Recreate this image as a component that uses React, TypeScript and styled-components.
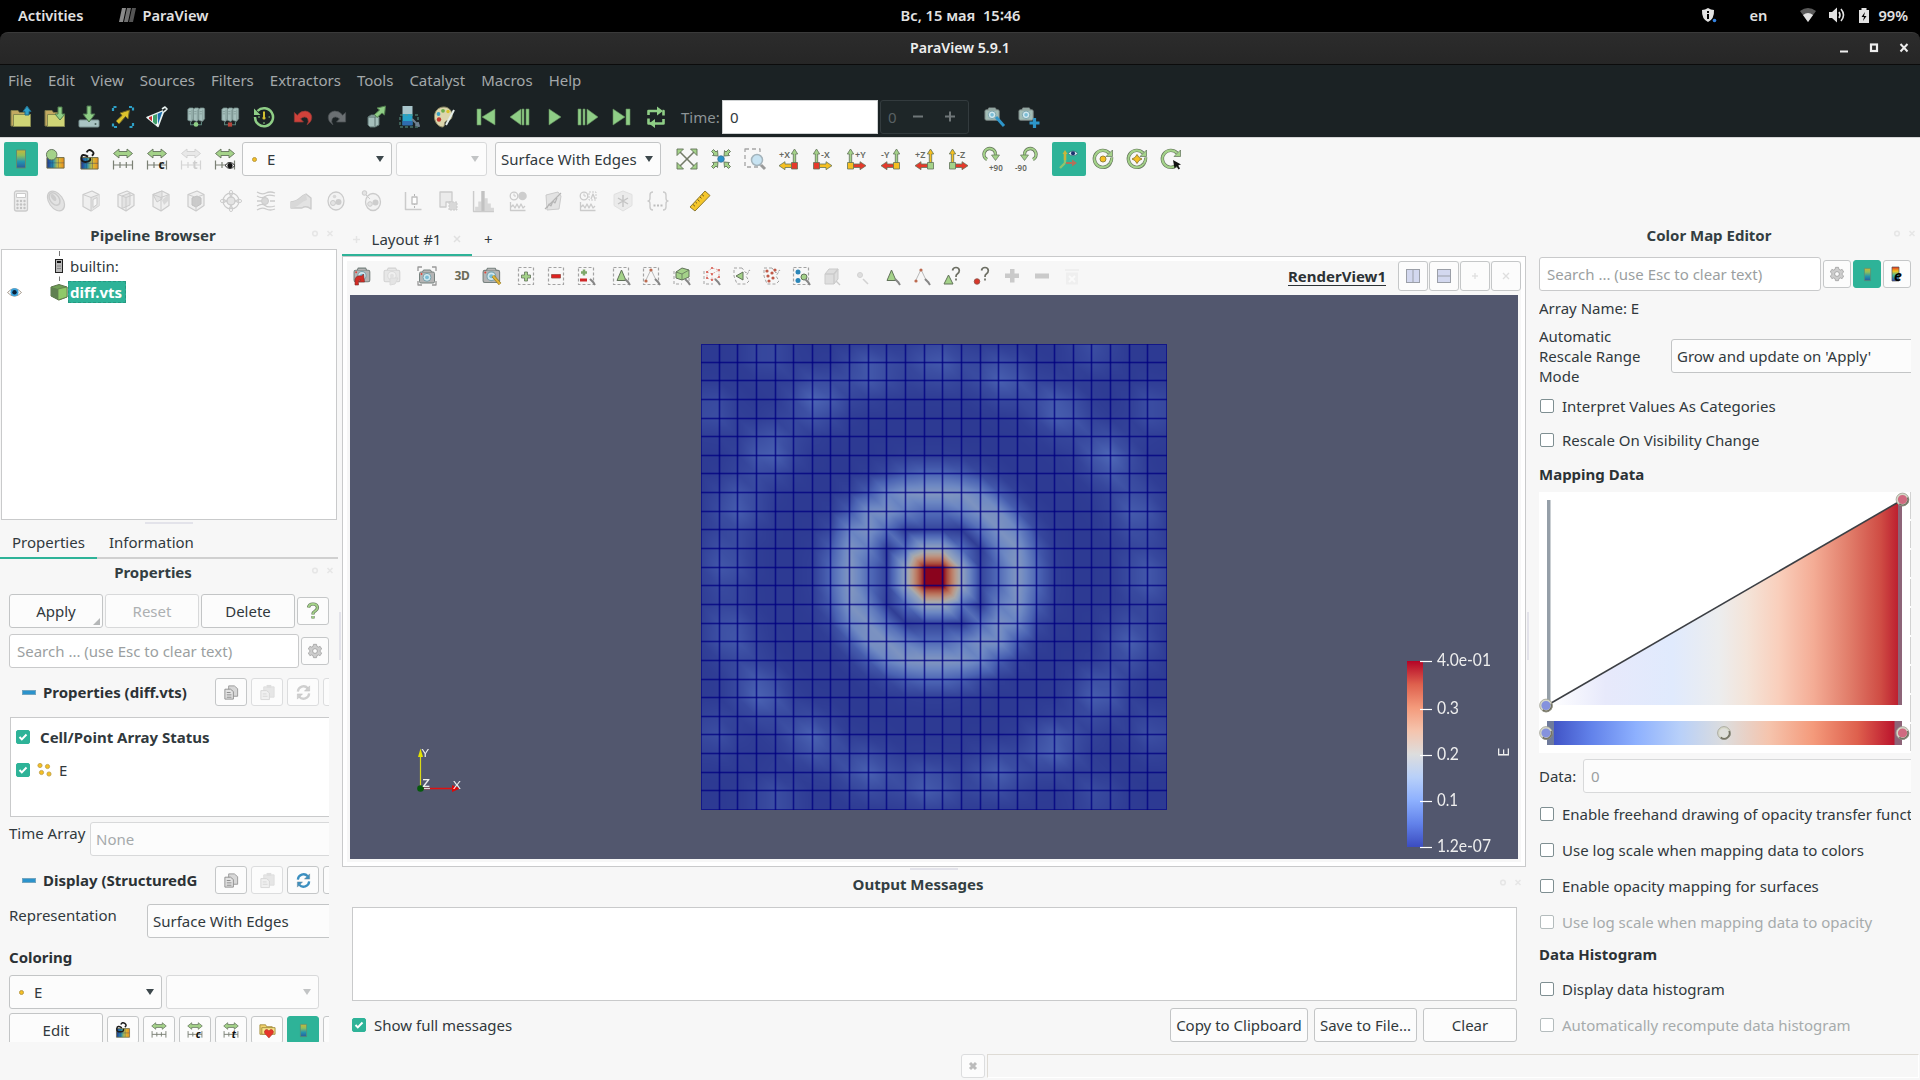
import React, { useLayoutEffect, useRef } from "react";
import styled, { createGlobalStyle, css } from "styled-components";

const GlobalStyle = createGlobalStyle`
  * { box-sizing: border-box; }
  html, body { margin: 0; padding: 0; width: 1920px; height: 1080px; overflow: hidden; background: #000; }
  body { font-family: "Noto Sans", "Open Sans", sans-serif; font-size: 15px; line-height: 20px; color: #31393d; }
  svg { display: block; flex: none; overflow: visible; }
`;

const ACCENT = "#2eb398";
const LINE = "#c9cacb";

/* ---------- window chrome ---------- */
const Desktop = styled.div`
  width: 1920px; height: 1080px; display: flex; flex-direction: column; background: #000; overflow: hidden; white-space: nowrap;
`;
const TopBar = styled.div`
  height: 32px; display: grid; grid-template-columns: 1fr auto 1fr; align-items: center; padding-bottom: 2px;
  color: #e2e2e2; font-weight: 600; background: #000; font-size: 14.67px;
`;
const TopLeft = styled.div`display: flex; align-items: center; padding-left: 18px;`;
const AppName = styled.div`display: flex; align-items: center; gap: 6px; margin-left: 36px;`;
const Clock = styled.span`padding-left: 1px;`;
const TopRight = styled.div`display: flex; align-items: center; justify-content: flex-end; padding-right: 12px;`;
const Lang = styled.span`margin: 0 33px 0 32px;`;
const TrayGap = styled.span<{ $w: number }>`width: ${p => p.$w}px; flex: none;`;
const TitleBar = styled.div`
  height: 33px; display: grid; grid-template-columns: 1fr auto 1fr; align-items: center; color: #eee; font-weight: 600; font-size: 14.2px;
  background: linear-gradient(#2c2c2c, #262626); border-top: 1px solid #3a3a3a; border-bottom: 1px solid #0b0b0b;
  border-radius: 8px 8px 0 0; padding-bottom: 1px;
`;
const WinButtons = styled.div`display: flex; justify-content: flex-end; gap: 20px; padding-right: 11px;`;
const MenuBar = styled.div`
  height: 33px; background: #1b2224; color: #a3a8aa; display: flex; align-items: center; padding: 0 0 4px 8px; gap: 16px;
`;
const DarkBar = styled.div`
  height: 40px; padding-bottom: 2px; background: #1b2224; border-bottom: 1px solid #d5d5d5; display: flex; align-items: center; padding-left: 4px; color: #8d9496;
`;
const LightBar = styled.div<{ $pad: number }>`
  height: 42px; background: #f7f7f7; display: flex; align-items: center; padding-left: ${p => p.$pad}px;
`;
const Tool = styled.div<{ $w?: number; $on?: boolean; $dim?: boolean }>`
  width: ${p => p.$w ?? 34}px; height: 34px; flex: none; display: flex; align-items: center; justify-content: center;
  border-radius: 2px; background: ${p => (p.$on ? ACCENT : "transparent")};
  ${p => p.$dim && css`opacity: 0.28; filter: grayscale(1);`}
`;
const Gap = styled.div<{ $w: number }>`width: ${p => p.$w}px; flex: none;`;
const TimeLabel = styled.span`width: 41px; margin-left: 8px;`;
const TimeInput = styled.div`
  width: 156px; height: 34px; background: #fff; border: 1px solid #cfd2d3; color: #31393d; padding: 6px 7px 0; margin-right: 2px;
`;
const TimeSpin = styled.div`
  width: 89px; height: 34px; border: 1px solid #333b3e; border-radius: 3px; display: flex; align-items: center;
  background: #1e2628; color: #596164; padding: 0 13px 0 7px; justify-content: space-between; margin-right: 9px;
`;
const SpinMarks = styled.div`display: flex; gap: 22px;`;

/* ---------- generic widgets ---------- */
const Combo = styled.div<{ $w: number; $off?: boolean; $pad?: number; $up?: boolean }>`
  width: ${p => p.$w}px; height: 34px; flex: none; background: #fcfcfc; border: 1px solid ${p => (p.$off ? "#d8d9da" : "#c3c5c6")};
  border-radius: 3px; display: flex; align-items: center; padding: 0 7px 0 ${p => p.$pad ?? 5}px; color: ${p => (p.$off ? "#a5a9ab" : "#31393d")};
  ${p => p.$up && css`margin-bottom: 2px;`}
`;
const Caret = styled.i<{ $off?: boolean }>`
  margin-left: auto; border: 4.5px solid transparent; border-top: 6px solid ${p => (p.$off ? "#c2c4c5" : "#3d484c")}; border-bottom: 0;
`;
const Dot = styled.i`
  width: 5px; height: 5px; border-radius: 50%; background: #f5bf22; border: 1px solid #b99a45; margin-right: 10px;
`;
const Button = styled.div<{ $w: number; $off?: boolean }>`
  width: ${p => p.$w}px; height: 34px; flex: none; background: #fcfcfc; border: 1px solid ${p => (p.$off ? "#d8d9da" : "#c3c5c6")};
  border-radius: 3px; display: flex; align-items: center; justify-content: center; position: relative;
  color: ${p => (p.$off ? "#adb0b2" : "#31393d")};
`;
const Corner = styled.i`
  position: absolute; right: 2px; bottom: 2px; border-bottom: 7px solid #b5b7b8; border-left: 7px solid transparent;
`;
const SmallButton = styled.div<{ $w?: number; $off?: boolean; $on?: boolean; $h?: number }>`
  width: ${p => p.$w ?? 32}px; height: ${p => p.$h ?? 28}px; flex: none; border-radius: 3px; display: flex; align-items: center; justify-content: center;
  background: ${p => (p.$on ? ACCENT : "#fcfcfc")}; border: 1px solid ${p => (p.$on ? ACCENT : p.$off ? "#dcddde" : "#c5c7c8")};
`;
const Search = styled.div<{ $w: number }>`
  width: ${p => p.$w}px; height: 34px; background: #fff; border: 1px solid ${LINE}; border-radius: 3px; padding: 6px 7px 0; color: #9b9fa1; flex: none;
`;
const Box = styled.span<{ $on?: boolean; $off?: boolean }>`
  width: 14px; height: 14px; flex: none; border-radius: 2px; display: flex; align-items: center; justify-content: center;
  background: ${p => (p.$on ? ACCENT : "#fff")}; border: 1px solid ${p => (p.$on ? ACCENT : p.$off ? "#b4bcbd" : "#7f8f92")};
`;
const Check = ({ on, off }: { on?: boolean; off?: boolean }) => (
  <Box $on={on} $off={off}>{on && <svg width="10" height="10" viewBox="0 0 10 10"><path d="M1.5 5l2.3 2.4L8.5 2.5" fill="none" stroke="#fff" strokeWidth="2" /></svg>}</Box>
);

/* ---------- docks ---------- */
const Workspace = styled.div`
  height: 826px; background: #f7f7f7; display: grid; grid-template-columns: 342px 1185px 393px;
`;
const Column = styled.div`display: flex; flex-direction: column; min-width: 0; overflow: hidden;`;
const DockTitle = styled.div<{ $h: number; $w: number; $left?: number; $low?: number }>`
  height: ${p => p.$h}px; width: ${p => p.$w}px; display: grid; grid-template-columns: 1fr 32px; align-items: center; text-align: center;
  font-weight: 700; color: #333e42; flex: none; padding-left: ${p => p.$left ?? 0}px; padding-bottom: ${p => p.$low ?? 2}px;
`;
const DockMarks = () => (
  <svg width="28" height="12" viewBox="0 0 28 12"><circle cx="9" cy="4.500" r="2.300" fill="none" stroke="#e6e6e6" strokeWidth="1.600" /><path d="M21.500 2l5 5m0-5l-5 5" stroke="#e6e6e6" strokeWidth="1.600" /></svg>
);
const Tree = styled.div`
  width: 336px; height: 271px; margin-left: 1px; flex: none; background: #fff; border: 1px solid ${LINE}; padding: 1px 0 0 0;
`;
const TreeRow = styled.div<{ $h: number }>`height: ${p => p.$h}px; display: grid; grid-template-columns: 48px 18px auto 1fr; align-items: center;`;
const Selected = styled.span`
  background: ${ACCENT}; outline: 1px dashed #259880; outline-offset: -1px; color: #fff; font-weight: 700; height: 22px; line-height: 22px; width: 58px; padding-left: 2px;
`;
const Plain = styled.span`padding: 0 0 0 2px;`;
const Handle = styled.div<{ $ml: number; $mt: number; $mb: number }>`
  width: 48px; height: 2px; background: #e3e3ea; margin: ${p => p.$mt}px 0 ${p => p.$mb}px ${p => p.$ml}px; flex: none;
`;
const SideHandle = styled.div<{ $left: number }>`
  position: absolute; left: ${p => p.$left}px; top: 612px; width: 2px; height: 48px; background: #e3e3ea;
`;
const Tabs = styled.div`
  width: 338px; height: 33px; flex: none; display: flex; box-shadow: inset 0 -2px #d0d0d0; 
`;
const Tab = styled.div<{ $w: number; $on?: boolean; $pad: number }>`
  width: ${p => p.$w}px; padding: 6px 0 0 ${p => p.$pad}px; ${p => p.$on && css`box-shadow: inset 0 -2px ${ACCENT};`}
`;
const Form = styled.div`
  width: 329px; height: 457px; flex: none; overflow: hidden; padding: 9px 0 0 9px; display: flex; flex-direction: column;
`;
const Row = styled.div<{ $gap?: number; $mt?: number; $h?: number; $align?: string; $w?: number }>`
  display: flex; gap: ${p => p.$gap ?? 0}px; margin-top: ${p => p.$mt ?? 0}px; align-items: ${p => p.$align ?? "center"}; flex: none;
  ${p => p.$h && `height: ${p.$h}px;`} ${p => p.$w && `width: ${p.$w}px;`}
`;
const Minus = styled.i`width: 14px; height: 5px; margin: 0 7px 0 13px; background: #2b93cc; border: 1px solid #73a5bf; flex: none;`;
const GroupName = styled.b`width: 172px; color: #2c3235; flex: none;`;
const ArrayList = styled.div`
  width: 330px; height: 100px; margin: 11px 0 0 1px; background: #fff; border: 1px solid ${LINE}; padding: 2px 0 0 5px; flex: none;
`;
const ArrayRow = styled.div`height: 33px; display: flex; align-items: center;`;
const ArrayTitle = styled.b`margin-left: 10px;`;
const ArrayName = styled.span`margin-left: 6px;`;
const Label = styled.span<{ $w: number; $top?: number }>`width: ${p => p.$w}px; flex: none; padding-top: ${p => p.$top ?? 1}px;`;
const Section = styled.b<{ $h: number; $top: number }>`height: ${p => p.$h}px; padding-top: ${p => p.$top}px; color: #2c3235; flex: none;`;

/* ---------- centre ---------- */
const LayoutTabs = styled.div`height: 34px; flex: none; display: flex; align-items: stretch; `;
const LayoutTab = styled.div`
  width: 130px; box-shadow: inset 0 -2px ${ACCENT}; display: flex; align-items: center; padding: 0 11px 0 11px; justify-content: space-between;
`;
const AddTab = styled.div`padding: 7px 0 0 12px;`;
const Frame = styled.div`width: 1184px; height: 611px; flex: none; border: 1px solid ${LINE}; background: #fff; padding: 4px;`;
const Pane = styled.div`height: 601px; background: #f7f7f7; display: flex; flex-direction: column; `;
const ViewBar = styled.div`height: 34px; display: flex; align-items: flex-start; flex: none;`;
const ViewTool = styled(Tool)`width: 30px; height: 30px;`;
const ViewName = styled.span`margin-left: auto; margin-right: 12px; padding-top: 5px; font-weight: 700; text-decoration: underline; text-underline-offset: 3px; color: #2c3235;`;
const ViewButtons = styled.div`display: flex; gap: 1px;`;
const RenderView = styled.div`height: 564px; margin: 0 3px; background: #52576e; position: relative; flex: none;`;
const MeshCanvas = styled.canvas`position: absolute; left: 351px; top: 49px; width: 466px; height: 466px;`;
const Overlay = styled.svg`position: absolute; left: 0; top: 0;`;
const OutputBox = styled.div`width: 1165px; height: 94px; margin: 8px 0 0 10px; background: #fff; border: 1px solid ${LINE}; flex: none;`;
const OutputRow = styled.div`display: flex; align-items: center; height: 34px; margin: 7px 0 0 10px; width: 1165px;`;
const OutLabel = styled.span`margin: 0 auto 0 8px;`;

/* ---------- colour map ---------- */
const MapForm = styled.div`width: 372px; margin: 8px 0 0 12px; overflow: hidden; display: flex; flex-direction: column;`;
const Line = styled.div<{ $h: number; $off?: boolean; $top?: number }>`
  height: ${p => p.$h}px; flex: none; display: flex; align-items: center; padding-top: ${p => p.$top ?? 0}px; padding-left: 1px; gap: 8px; color: ${p => (p.$off ? "#a6abac" : "#31393d")};
`;
const ArrayLabel = styled.div`height: 36px; padding-top: 7px; flex: none;`;
const Wrapped = styled.div`width: 132px; white-space: pre-line; flex: none; margin-top: -2px;`;
const DataInput = styled.div`width: 340px; height: 34px; border: 1px solid #d8d9da; background: #fcfcfc; border-radius: 3px; padding: 6px 7px 0; color: #9b9fa1; flex: none;`;

const StatusBar = styled.div`height: 32px; background: #f7f7f7; display: flex; padding: 6px 0 0 961px; gap: 2px;`;
const Progress = styled.div`width: 932px; height: 24px; border: 1px solid #dedbd5; border-right-color: #fff; border-bottom-color: #fff;`;

/* ---------- icons ---------- */
const E = "#62735a";
const GR = "#a4d289";
const Svg = ({ s = 22, v = 22, children }: { s?: number; v?: number; children: React.ReactNode }) => (
  <svg width={s} height={s} viewBox={`0 0 ${v} ${v}`} fill="none" strokeLinejoin="round">{children}</svg>
);
const HiddenDefs = styled.svg`position: absolute;`;
const Defs = () => (
  <HiddenDefs width="0" height="0">
    <defs>
      <linearGradient id="jetv" x1="0" y1="0" x2="0" y2="1"><stop offset="0" stopColor="#c9b53a" /><stop offset=".3" stopColor="#8fbf5a" /><stop offset=".65" stopColor="#2294ae" /><stop offset="1" stopColor="#2b5a9c" /></linearGradient>
      <linearGradient id="jeth"><stop offset="0" stopColor="#26348c" /><stop offset=".35" stopColor="#1f8fb4" /><stop offset=".65" stopColor="#d6c63a" /><stop offset="1" stopColor="#ea8a1e" /></linearGradient>
      <linearGradient id="rain" x1="0" y1="0" x2="0" y2="1"><stop offset="0" stopColor="#e22c1c" /><stop offset=".3" stopColor="#f5c61f" /><stop offset=".6" stopColor="#3fb8a0" /><stop offset="1" stopColor="#3148b8" /></linearGradient>
    </defs>
  </HiddenDefs>
);
const ColorBarIcon = ({ s = 22 }) => <Svg s={s}><rect x="6.500" y="2" width="9" height="18" fill="url(#jetv)" stroke="#5f8d70" /></Svg>;
const FolderBase = () => <path d="M1 20V4.500h7l1.500 2H17V9h3.500v11z" fill="#c3a961" stroke="#7f7a48" />;
const Folder = ({ down }: { down?: boolean }) => (
  <Svg><FolderBase /><path d="M3.500 8.500h17V20.500h-17z" fill="#cfd476" stroke="#878a50" />
    {down ? <path d="M14 1h4v7h3l-5 6-5-6h3z" fill="#8fce86" stroke="#4f7a4c" /> : <path d="M17 0l4 5.500h-2V9h-4V5.500h-2z" fill="#2fa0c8" stroke="#236a86" />}
  </Svg>
);
const SaveIcon = () => <Svg><rect x="1" y="14" width="20" height="7" rx="1" fill="#a9c4c4" stroke="#7c9494" /><path d="M9 0h4v8h4l-6 8-6-8h4z" fill="#8fce86" stroke="#4d7550" /><circle cx="17.500" cy="18" r="1" fill="#49605c" /></Svg>;
const ExtractIcon = () => <Svg><path d="M1 5V1h4M17 1h4v4M21 17v4h-4M5 21H1v-4" stroke="#2d9fc6" strokeWidth="2.200" strokeDasharray="3 1.500" /><path d="M17.500 4l-1.500 9-2.500-2.500L7 18l-3-3 6-5.500L8 7z" fill="#dcc22c" stroke="#6f6626" /></Svg>;
const CatalystIcon = () => <Svg><path d="M18 4.500L1 11.500l11 9z" fill="#fff" stroke="#e9f3f1" strokeWidth="1.500" /><path d="M3 11.200l3-1.200v5.300l-3-2.600z" fill="#c73339" /><path d="M7 9.600l4-1.700v9.600l-1.500 1L7 16z" fill="#3fa06a" /><path d="M11.500 7.700l5-2.200-4.500 13z" fill="#1e6fae" /><path d="M16 3l3-2 2 2-3 3" stroke="#e9f3f1" strokeWidth="1.600" fill="#1b2224" /></Svg>;
const ServerIcon = ({ c, kind }: { c: string; kind: number }) => (
  <Svg s={20}>{[2, 8, 14].map(x => <g key={x}><path d={`M${x} 2.500l2-1.500h3.500l1 1v11l-2.500 3-4-1.500z`} fill="#a5bfbc" stroke="#6d8582" strokeWidth=".8" /><path d={`M${x + 1} 5h2.500m-2.500 2.500h2.500M${x + 4.5} 3v12.500`} stroke="#7f9794" strokeWidth=".8" /></g>)}
    <path d="M5 16.500v3h4.500M17 16.500v3h-4.500" stroke="#5a8078" strokeWidth="1.200" />{kind ? <rect x="8.700" y="17" width="4.600" height="4.600" fill={c} /> : <circle cx="11" cy="19.200" r="2.600" fill={c} />}</Svg>
);
const TimerIcon = () => <Svg><path d="M4.500 5A9 9 0 1 1 2 11" stroke="#8fce86" strokeWidth="2.500" /><path d="M1 2.500v6.500h6.500z" fill="#8fce86" /><path d="M11 5.500v6" stroke="#d3c02f" strokeWidth="2" /><circle cx="11" cy="12" r="1.600" fill="#d3c02f" /><path d="M5 11h2M15.500 11H17M11 16v2" stroke="#8fce86" /></Svg>;
const UndoIcon = ({ c, flip }: { c: string; flip?: boolean }) => <Svg s={20}><g transform={flip ? "translate(22 0) scale(-1 1)" : undefined}><path d="M1.500 6v10.500h10L8.300 13q5-4 8 0 1.500 3-.8 6.500 6-4 5-9.500-1.500-5-7-5.500-5-.3-8.700 4.500z" fill={c} stroke={flip ? "#4b5053" : "#8f3a36"} strokeWidth=".8" /></g></Svg>;
const CubeArrowIcon = () => <Svg><path d="M3 11l3-2h6l2 2v8l-4 2H5l-2-2z" fill="#a5bfbc" stroke="#5d7370" /><path d="M3 11h7l4-1M10 11v9" stroke="#5d7370" /><path d="M20.500 0l-1 9-2.500-2-5 4.500-2.500-3L14.500 4 12 2z" fill="#8fce86" stroke="#4f7a4c" /></Svg>;
const BoxSelectIcon = () => <Svg><rect x="3.500" y="0" width="10" height="8" fill="#a9c6cc" /><rect x="3.500" y="8" width="10" height="11" fill="#27a3c9" /><rect x="3.500" y="15" width="10" height="4.500" fill="#2f6cb0" /><rect x="1" y="9" width="18" height="12" stroke="#5f9a8a" strokeDasharray="3 2" /><path d="M13 13l5 5m2 2l-3-1 2-2z" stroke="#6f8090" strokeWidth="2" /></Svg>;
const PaletteIcon = () => <Svg><path d="M11 1C4.500 1 1 6 1.500 12c.5 5 4.500 9 8 9 2.500 0 1.500-3 2.500-5s6-1 7-5-2-10-8-10z" fill="#dcd6ac" stroke="#8b8763" /><circle cx="6" cy="13.500" r="2.200" fill="#c2382f" /><circle cx="5.500" cy="8" r="1.900" fill="#3aa0c4" /><circle cx="10" cy="4.800" r="1.900" fill="#6fae4c" /><circle cx="15" cy="5.500" r="1.700" fill="#dcc22c" /><path d="M21 4l-8 15" stroke="#e4ede9" strokeWidth="2" /></Svg>;
const Play = ({ d }: { d: string }) => <Svg><path d={d} fill="#8fce86" stroke="#628f5c" strokeWidth=".6" /></Svg>;
const LoopIcon = () => <Svg><path d="M3.500 9V5h9M18.500 13v4.500H9M3.500 12.500v5h2.500M18.500 9.500V5h-1" stroke="#8fce86" strokeWidth="2.600" /><path d="M12 .5l6 4.500-6 4.500zM10 13l-6 4.500 6 4.500z" fill="#8fce86" /></Svg>;
const Camera = ({ x = 0, y = 0, k = 1, c = "#a3bdb6", r = false }) => <g transform={`translate(${x} ${y}) scale(${k})`}><rect x="1" y="4" width="15" height="11" rx="1.500" fill={c} stroke="#77827f" /><path d="M4 4l1-2h7l1 2" fill={c} stroke="#77827f" /><circle cx="8.500" cy="9.300" r="4" fill="#cfe7ee" stroke="#7aa3ad" /><circle cx="8.500" cy="9.300" r="1.900" fill="#79bdd6" />{r && <circle cx="3" cy="6" r=".9" fill="#e24437" />}</g>;
const RescaleIcon = ({ t, dark = "#1d1d1d", eye }: { t?: string; dark?: string; eye?: boolean }) => (
  <Svg s={22}><path d="M1.500 5.500L7 1v2.500h8V1l5.500 4.500L15 10V7.500H7V10z" fill={GR} stroke={E} strokeWidth=".9" /><path d="M1.500 12.500v9M1.500 17h19M20.500 12.500v9M8 14v6M14.300 14v6" stroke="#7b8075" strokeWidth="1.200" />
    {t && <text x="12.500" y="21" fontSize="12" fontWeight="700" fill={dark} fontFamily="Noto Sans">{t}</text>}
    {eye && <><path d="M11 17.500q5-6 10 0-5 6-10 0z" fill="#fff" stroke="#222" /><circle cx="16" cy="17.500" r="2.600" fill="#111" /></>}</Svg>
);
const ColorEditIcon = () => <Svg s={21}><path d="M2 9h18v11H2z" fill="url(#jeth)" stroke="#6c6a42" /><path d="M8 9.500v10M14 9.500v10M2 14.500h18" stroke="#33406a" strokeOpacity=".4" /><circle cx="7" cy="6" r="5.500" fill={GR} stroke={E} /></Svg>;
const LinkColorIcon = ({ s = 21 }) => <Svg s={s}><path d="M2 9h18v12H2z" fill="url(#jeth)" stroke="#6c6a42" /><path d="M8 9.500v11M14 9.500v11M2 15h18" stroke="#33406a" strokeOpacity=".5" /><path d="M8 3.500Q10-.5 13.500 2t0 5M9.500 8Q3 4 2.500 9t5 4.500 4-4" stroke="#1b1b1b" strokeWidth="2" /></Svg>;
const Cross4 = ({ inward }: { inward?: boolean }) => (
  <Svg>{[0, 90, 180, 270].map(a => <g key={a} transform={`rotate(${a} 11 11)`}>{inward ? <path d="M1.500 3.500l2-2 2.500 2.500 1.500-1.500.5 5.500-5.500-.5L4 6z" fill={GR} stroke={E} strokeWidth=".9" /> : <><path d="M3 3l8 8" stroke="#737a68" strokeWidth="1.600" /><path d="M1 1h6.500L1 7.500z" fill={GR} stroke={E} strokeWidth=".9" /></>}</g>)}
    {inward && <circle cx="11" cy="11" r="3.300" fill="#2b93cc" stroke="#3c6f8e" strokeWidth=".7" />}</Svg>
);
const ZoomBoxIcon = () => <Svg><rect x="1" y="1" width="15" height="18" stroke="#a5a5a5" strokeWidth="1.300" strokeDasharray="4 3" /><path d="M17 17l4 4" stroke="#9a9a9a" strokeWidth="3" /><circle cx="13" cy="12" r="5.500" fill="#c7e3f2" stroke="#a4b4bc" strokeWidth="1.500" /></Svg>;
const AxisIcon = ({ t, right, side, up, sq }: { t: string; right: boolean; side: string; up: string; sq: string }) => {
  const bx = right ? 13.5 : 1.5;
  return (
    <Svg><text x={right ? 1 : 9} y="10" fontSize="9" fill="#65685f" fontFamily="Noto Sans" fontWeight="600">{t}</text>
      <path d={`M${bx + 1.8} 15V6h-2l3.200-5 3.200 5h-2v9z`} fill={up} stroke={E} strokeWidth=".8" />
      {right ? <path d="M14 16H7v-2.300L1 17.700l6 4V19.500h7z" fill={side} stroke={E} strokeWidth=".8" /> : <path d="M7 16h7v-2.300l6 4-6 4V19.500H7z" fill={side} stroke={E} strokeWidth=".8" />}
      <rect x={bx} y="14.500" width="6" height="6.500" fill={sq} stroke={E} strokeWidth=".8" /></Svg>
  );
};
const RotIcon = ({ t, flip }: { t: string; flip?: boolean }) => <Svg s={24} v={24}><g transform={flip ? "translate(24 0) scale(-1 1)" : undefined}><path d="M6 12.500A5.800 5.800 0 1 1 14.500 8" stroke={E} strokeWidth="3.400" /><path d="M6 12.500A5.800 5.800 0 1 1 14.500 8" stroke={GR} strokeWidth="2" /><path d="M10.500 8h8l-4 5.500z" fill={GR} stroke={E} strokeWidth=".7" /></g><text x={flip ? 0 : 8} y="23.500" fontSize="8" fill="#65685f" fontWeight="600" fontFamily="Noto Sans">{t}</text></Svg>;
const CenterIcon = ({ mode }: { mode: number }) => <Svg><path d="M18 15.500A8.500 8.500 0 1 1 17 5" stroke={E} strokeWidth="3.400" /><path d="M18 15.500A8.500 8.500 0 1 1 17 5" stroke={GR} strokeWidth="2.100" /><path d="M20.500 2v6.500H14z" fill={GR} stroke={E} strokeWidth=".7" />
  {mode < 2 && <><path d="M19.700 9.500q.3 3.200-1.700 6" stroke={E} strokeWidth="3.200" /><path d="M19.700 9.500q.3 3.200-1.700 6" stroke={GR} strokeWidth="2" /></>}
  {mode === 0 && <circle cx="11" cy="11" r="3" fill="#f5bf22" stroke="#9a8436" />}{mode === 1 && <path d="M11 6.500L13 9.500 16 11l-3 1.500L11 15.500 9 12.500 6 11l3-1.500z" fill="#f5bf22" stroke="#9a8436" />}{mode === 2 && <path d="M13 12l8 4.500-3 .8 2 3.200-1.500 1-2-3.200-2 2z" fill="#111" />}</Svg>;
const OrientIcon = () => <Svg><path d="M7 15V5M7 15l-5 5" stroke="#8fc46f" strokeWidth="2.400" /><path d="M7 12V5" stroke="#c9b53a" strokeWidth="2.400" /><path d="M4.500 6L7 2l2.500 4z" fill="#c9b53a" /><path d="M8 14h6v-2.500l5 3.500-5 3.500V16H8z" fill="#b3705a" /><path d="M10 5.500q5-5 10 0-5 4.500-10 0z" fill="#cfe3ea" stroke="#3d6a78" strokeWidth=".7" /><circle cx="15" cy="5.300" r="2" fill="#1b2f6e" /></Svg>;
const RulerIcon = () => <Svg s={22}><path d="M1 17L16 1l5 4.500L6 21z" fill="#f5c62a" stroke="#8f7a2e" /><path d="M4 14.500l2 1.800M6.500 12l1.500 1.300M8.500 9.500l2 1.800M11 7l1.500 1.300M13 4.500l2 1.800" stroke="#6d5d20" /></Svg>;

/* filter icons share one neutral stroke and two fills */
const FS = "#cbcbcb", FF = "#e3e3e3", FD = "#d8d8d8";
const Cube = ({ children }: { children?: React.ReactNode }) => <Svg><path d="M3 4.500L12 1l7 3.500v11L11 21l-8-4.500z" fill="#efefef" stroke={FS} strokeWidth="1.200" />{children}<path d="M3 4.500l8 3 8-3M11 7.500V21" stroke={FS} /></Svg>;
const filterIcons: React.ReactNode[] = [
  <Svg><rect x="4.500" y="1" width="13" height="20" rx="2" fill="#ededed" stroke={FS} strokeWidth="1.300" /><rect x="6.500" y="3.500" width="9" height="4" fill="#fff" stroke={FS} />{[11, 14.5, 18].map(y => [7.5, 11, 14.5].map(x => <circle key={x + "_" + y} cx={x} cy={y} r="1.200" fill="#c2c2c2" />))}</Svg>,
  <Svg><ellipse cx="11" cy="11" rx="7" ry="11" transform="rotate(-35 11 11)" fill={FF} stroke={FS} strokeWidth="1.200" /><ellipse cx="9.500" cy="9" rx="4.500" ry="7" transform="rotate(-35 9.500 9)" stroke={FS} strokeWidth="1.500" /><ellipse cx="8.500" cy="7.500" rx="2" ry="4" transform="rotate(-35 8.500 7.500)" fill="#cdcdcd" /></Svg>,
  <Cube><path d="M11 7.500L19 4.500v11L11 21z" fill={FF} /><path d="M13 9.500l4-2v7L13 17.500z" fill="#f6f6f6" stroke={FS} /></Cube>,
  <Cube><path d="M7 6l8-3v12l-8 3.500z" fill={FF} stroke={FS} /></Cube>,
  <Cube><path d="M3 4.500L12 1v8l-5 3z" fill={FF} stroke={FS} /><path d="M12 10l7-6v6l-5 5z" fill={FD} /></Cube>,
  <Cube><path d="M7 8l5-2 4 2v6l-5 3-4-2z" fill="#cacaca" stroke="#c0c0c0" /></Cube>,
  <Svg><circle cx="11" cy="11" r="8" stroke={FS} strokeWidth="1.300" /><circle cx="11" cy="11" r="4" fill={FF} stroke={FS} strokeWidth="1.400" />{[0, 90, 180, 270].map(a => <g key={a} transform={`rotate(${a} 11 11)`}><path d="M11 7L9 3h4z" fill={FD} stroke={FS} /><circle cx="11" cy="2" r="1.500" fill="#fff" stroke={FS} /></g>)}</Svg>,
  <Svg><path d="M2 2q5 3 9 1t9 0M2 6q5 3 8 .5T20 6M2 11h4M2 16q5-3 8-.5T20 16M2 20q5-3 9-1t9 0M15 11h5" stroke={FS} strokeWidth="1.300" /><circle cx="10" cy="11" r="3.500" fill={FD} stroke={FS} /></Svg>,
  <Svg><path d="M1 18v-6q6-1 9-4t6-4l5 4v11q-5-4-9-1z" fill={FF} stroke={FS} strokeWidth="1.300" /><path d="M1 12q6-1 9-4t6-4l1 6q-4 1-7 4t-9 4z" fill={FD} /></Svg>,
  <Svg><ellipse cx="11" cy="11" rx="8" ry="9" fill="#f2f2f2" stroke={FS} strokeWidth="1.300" /><circle cx="8" cy="13" r="2.500" fill={FF} stroke={FS} /><circle cx="13.500" cy="12" r="3" fill="#cdcdcd" /><circle cx="9.500" cy="6.500" r="1.800" fill={FD} /></Svg>,
  <Svg><ellipse cx="13" cy="12" rx="7.500" ry="8.500" fill="#f2f2f2" stroke={FS} strokeWidth="1.300" /><circle cx="4.500" cy="3" r="2.300" fill={FF} stroke={FS} /><circle cx="10" cy="14" r="2.300" fill={FF} stroke={FS} /><circle cx="15.500" cy="12.500" r="3" fill="#cdcdcd" /><path d="M6 5l4 4" stroke={FS} /></Svg>,
  <Svg><path d="M3.500 2v17.500h16" stroke={FS} strokeWidth="1.500" /><path d="M12.500 4v14" stroke="#b5b5b5" strokeDasharray="2 1" /><rect x="10" y="7" width="5" height="7" fill="#fff" stroke="#bdbdbd" strokeWidth="1.300" /></Svg>,
  <Svg><path d="M3 2h12v10H9v5H3z" fill="#ebebeb" stroke={FS} strokeWidth="1.300" /><rect x="12" y="12" width="8" height="8" fill={FD} stroke={FS} strokeDasharray="2 1" /></Svg>,
  <Svg s={23}><path d="M1.500 1v19.500H21" stroke={FS} strokeWidth="1.400" /><path d="M3 20v-4h3v-5h3V1h3v7h3v5h3v4h3v3z" fill={FD} /><path d="M9 20V1h3v19z" fill="#c2c2c2" /></Svg>,
  <Svg><circle cx="7" cy="6" r="3.800" stroke={FS} strokeWidth="1.300" /><path d="M7 3.500V6h2" stroke={FS} /><circle cx="15.500" cy="6" r="4.300" fill="#cdcdcd" /><path d="M3.500 12v8.500h15M4 17l2-2 2 3 2-4 2 4 2-4 2 4 2-2" stroke={FS} strokeWidth="1.300" /></Svg>,
  <Svg><path d="M4 5l12-3 3 4-2 13-12 1z" fill={FF} stroke={FS} /><path d="M3 19L19 3M5 18l2-4 2 2 2-5 2 2 2-5" stroke="#b5b5b5" strokeWidth="1.100" /></Svg>,
  <Svg><circle cx="7" cy="6" r="3.800" stroke={FS} strokeWidth="1.300" /><path d="M7 3.500V6h2" stroke={FS} /><rect x="12" y="2" width="7" height="8" stroke={FS} strokeDasharray="2 1" /><path d="M14 9l2-5 2 5M3.500 12v8.500h15M4 17l2-2 2 3 2-4 2 4 2-4 2 4 2-2" stroke={FS} strokeWidth="1.300" /></Svg>,
  <Svg><path d="M11 1l9 3.500v11L11 21l-9-5.500v-11z" fill="#ebebeb" stroke="#e0e0e0" /><path d="M11 5v12M6 8l10 6M16 8L6 14" stroke="#c4c4c4" strokeWidth="1.400" /></Svg>,
  <Svg><path d="M6 2Q3 2 3 5v3q0 3-2 3 2 0 2 3v3q0 3 3 3M16 2q3 0 3 3v3q0 3 2 3-2 0-2 3v3q0 3-3 3" stroke={FS} strokeWidth="1.400" /><path d="M6.500 15.500h9" stroke="#bdbdbd" strokeWidth="2" strokeDasharray="2 1.500" /></Svg>,
];

/* view toolbar */
const Dash = () => <rect x="1.500" y="1.500" width="15" height="17" stroke="#a3a3a3" strokeWidth="1.200" strokeDasharray="3 2" />;
const Wand = () => <path d="M13 13l4 4M16 16l2 3" stroke="#868686" strokeWidth="2" />;
const V = ({ children }: { children: React.ReactNode }) => <Svg s={20} v={20}>{children}</Svg>;
const Tri = () => <path d="M9.500 4l4.500 10.500H5z" fill={GR} stroke={E} />;
const TriPts = () => <><path d="M9 3.500L3.500 15M9 3.500L14 14" stroke="#b9b9b9" /><circle cx="9" cy="4" r="1.600" fill="#bc6b50" /><circle cx="4" cy="15" r="1.600" fill="#bc6b50" /></>;
const FadedCamera = styled.div`opacity: 0.3; filter: grayscale(1);`;
const ThreeD = styled.span`font-size: 12px; font-weight: 700; color: #6b6c5a; letter-spacing: -0.3px;`;
const QMARK = "q.5-3 3.500-3t3.300 3q0 2-1.800 3.200T";
const viewIcons: (React.ReactNode | number)[] = [
  <V><Camera x={1} y={0} k={1.05} c="#b4b4b4" r /><path d="M3 19v-5.500q1-4.500 6.500-3.500l2-2 1 8H7l1.800-2Q6 13.500 6.500 19z" fill="#d32c25" stroke="#7b2b28" strokeWidth=".6" /></V>,
  <FadedCamera><V><Camera x={1} y={0} k={1.05} c="#c4c4c4" /><path d="M8 19v-7l8 0-3 6z" fill="#bbb" stroke="#999" /></V></FadedCamera>, 5,
  <V><path d="M1 5V1h4M15 1h4v4M19 15v4h-4M5 19H1v-4" stroke="#999" strokeWidth="1.300" /><Camera x={1.5} y={2} c="#b4b4b4" r /></V>, 5,
  <ThreeD>3D</ThreeD>, <V><Camera x={0} y={0} k={1.1} c="#b4b4b4" r /><path d="M11 10l7 8" stroke="#8a742a" strokeWidth="3.400" /><path d="M11 10l7 8" stroke="#e0b437" strokeWidth="1.900" /></V>, 5,
  <V><Dash /><path d="M7.500 6h3v3h3v3h-3v3h-3v-3h-3V9h3z" fill={GR} stroke={E} strokeWidth=".8" /></V>,
  <V><Dash /><rect x="4.500" y="8.500" width="9" height="3.500" fill="#e02020" stroke="#9a4a40" strokeWidth=".8" /></V>,
  <V><Dash /><path d="M7 3.500v6M4 6.500h6" stroke="#7fa86a" strokeWidth="2.500" /><path d="M3 14h7" stroke="#cf2828" strokeWidth="3" /><Wand /></V>, 5,
  <V><Dash /><Tri /><Wand /></V>,
  <V><Dash /><TriPts /><Wand /></V>,
  <V><path d="M2 5v13h8M17 12v6" stroke="#a3a3a3" strokeDasharray="3 2" /><path d="M4 6l6-4 7 2v7l-7 3-6-2z" fill={GR} stroke={E} /><path d="M4 6l6 2 7-4M10 8v6" stroke={E} strokeWidth=".8" /><Wand /></V>,
  <V><path d="M2 5v13h9" stroke="#a3a3a3" strokeDasharray="3 2" /><path d="M5 6l5-4 7 2v7l-7 3-5-2zM5 6l5 2 7-4M10 8v6" stroke="#e3a9a3" strokeDasharray="2 1.500" />{[[5, 6], [10, 2], [17, 4], [10, 8], [5, 12], [17, 11], [10, 14]].map(([x, y]) => <circle key={x + "-" + y} cx={x} cy={y} r="1" fill="#d65246" />)}<Wand /></V>,
  <V><path d="M10 2H2v8l3 8h9l3-3-3-5 4-6-4 3z" stroke="#a3a3a3" strokeDasharray="3 2" /><path d="M11 6v8l-7-4z" fill={GR} stroke={E} /></V>,
  <V><path d="M10 2H2v8l3 8h9l3-3-3-5 4-6-4 3z" stroke="#a3a3a3" strokeDasharray="3 2" />{[[5, 5], [10, 7], [6, 10], [11, 12], [7, 15], [13, 4]].map(([x, y]) => <circle key={x + "-" + y} cx={x} cy={y} r="1.600" fill="#c05a48" />)}</V>,
  <V><Dash /><circle cx="6" cy="6" r="2.500" fill="#2b86b8" /><circle cx="6" cy="14.500" r="2.500" fill="#2b86b8" /><circle cx="12" cy="11" r="3" fill={GR} stroke={E} /><Wand /></V>,
  <V><path d="M3 8l4-5h9v10l-4 5H3z" fill="#dedede" stroke="#cbcbcb" /><path d="M3 8h9v10M12 8l4-5M14 15l4 4" stroke="#cbcbcb" strokeWidth="1.400" /></V>,
  <V><circle cx="8" cy="9" r="2.500" fill="#dedede" stroke="#d2d2d2" /><path d="M11 13l5 5" stroke="#d2d2d2" strokeWidth="1.600" /></V>,
  <V><Tri /><Wand /></V>,
  <V><TriPts /><Wand /></V>,
  <V><path d="M6.500 9l4.500 9H2z" fill={GR} stroke={E} /><path d={`M10.500 4.500${QMARK}14 11m0 1.500v2`} stroke="#6c6e63" strokeWidth="1.700" /></V>,
  <V><circle cx="5" cy="15.500" r="2.800" fill="#d7372a" stroke="#8c5247" strokeWidth=".8" /><path d={`M9.500 4.500${QMARK}13 11m0 1.500v2`} stroke="#6c6e63" strokeWidth="1.700" /></V>,
  <V><path d="M8 3h4.500v4.500H17V12h-4.500v4.500H8V12H3V7.500h5z" fill="#cacaca" /></V>,
  <V><rect x="3" y="7.500" width="14" height="5" fill="#cacaca" /></V>,
  <V><path d="M3 3h14v2H3zM4 6.500h12v12H4z" fill="#efefef" /><path d="M7 10l6 6m0-6l-6 6" stroke="#fafafa" strokeWidth="2" /></V>,
];

const Gear = () => (
  <Svg s={16} v={18}>
    <path d="M7.300 1.500h3.400l.4 2.200 1.600.9 2.100-.8 1.700 3-1.700 1.400v1.600l1.700 1.400-1.700 3-2.100-.8-1.600.9-.4 2.200H7.300l-.4-2.200-1.600-.9-2.100.8-1.700-3 1.700-1.400V8.200L1.500 6.800l1.700-3 2.100.8 1.600-.9z" fill="#cdcdcd" stroke="#a6a6a6" strokeWidth="1" />
    <circle cx="9" cy="9" r="2.700" fill="#fcfcfc" stroke="#a6a6a6" strokeWidth="1.100" />
  </Svg>
);
const CopyIcon = () => <Svg s={17} v={18}><path d="M6 2h6l3.500 3v8H6z" fill="#d7d7d7" stroke="#9a9a9a" /><path d="M2 5.500h6l3 2.500v8H2z" fill="#e2e2e2" stroke="#8f8f8f" /><path d="M4 9h4M4 11.500h5M4 14h5" stroke="#8a8a8a" /></Svg>;
const PasteIcon = () => <Svg s={17} v={18}><g opacity=".45"><path d="M5 3h11v11H5z" fill="#ccc" stroke="#bbb" /><rect x="8" y="1" width="5" height="3" fill="#bbb" /><path d="M2 7h6l3 2.500v7H2z" fill="#e2e2e2" stroke="#aaa" /><path d="M4 10.500h4M4 13h5" stroke="#aaa" /></g></Svg>;
const RefreshIcon = ({ c, e }: { c: string; e: string }) => <Svg s={17} v={18}><path d="M3 8A6 6 0 0 1 13.500 4.500M15 10A6 6 0 0 1 4.500 13.500" stroke={c} strokeWidth="2.400" /><path d="M15.500 2v5.500H10zM2.500 16v-5.500H8z" fill={c} stroke={e} strokeWidth=".5" /></Svg>;
const HeartIcon = () => <Svg s={17} v={18}><path d="M1 13V3h6l1 2h6v8z" fill="#f3d36b" stroke="#a68e3f" /><path d="M3 13V6h14v7z" fill="#f9e58a" stroke="#a68e3f" /><path d="M10.500 17l-4.500-5q-1-3 1.500-4 2-.3 3 1.500 1-1.800 3-1.500 2.500 1 1.500 4z" fill="#e6352a" stroke="#a6392f" strokeWidth=".6" /></Svg>;
const EyeIcon = () => <svg width="15" height="11" viewBox="0 0 15 11"><path d="M.5 5.500Q7.500-2.500 14.500 5.500 7.500 13 .5 5.500z" fill="#fff" stroke="#a79c8f" /><circle cx="7.500" cy="5.300" r="4" fill="#3aa2dc" /><circle cx="7.500" cy="5.300" r="2.200" fill="#082038" /></svg>;
const DotsIcon = () => <svg width="16" height="16" viewBox="0 0 16 16">{[[3, 3.5], [10.5, 4.5], [4.5, 10.5], [12, 12]].map(([x, y]) => <circle key={x} cx={x} cy={y} r="2.100" fill="#f5bf22" stroke="#b99a45" strokeWidth=".8" />)}</svg>;
const RescaleSmall = ({ t }: { t?: string }) => (
  <Svg s={16}><path d="M1 5.500L6.500 1v2.500h9V1L21 5.500 15.500 10V7.500h-9V10z" fill={GR} stroke={E} /><path d="M1.500 12.500v9M1.500 17h19M20.500 12.500v9M8 14v6M14.300 14v6" stroke="#7b8075" strokeWidth="1.300" />
    {t && <text x="12" y="21.500" fontSize="14" fontWeight="700" fontStyle="italic" fill="#111" fontFamily="Noto Sans">{t}</text>}</Svg>
);

/* ---------- rendered data ---------- */
const COOLWARM = [[59, 76, 192], [98, 130, 234], [141, 176, 254], [184, 208, 249], [221, 221, 221], [245, 196, 173], [244, 154, 123], [222, 96, 77], [180, 4, 38]];
const SHADE = 0.765;
const PROFILE: [number, number][] = [[0, 1], [0.72, 1], [1.58, 0.4], [2.13, 0.16], [2.55, 0.03], [2.95, 0.01], [3.55, 0.16], [4, 0.27], [4.55, 0.34], [5, 0.29], [5.55, 0.13], [6, 0.05], [6.5, 0.015], [7.1, 0], [9, 0], [18, 0]];
const SPOTS: [number, number, number][] = [
  [3.6, 0.5, 0.07], [9, 1.4, 0.1], [6.2, 3, 0.13], [3.7, 5.8, 0.12], [2, 8.7, 0.1], [1.3, 11.8, 0.08], [1.6, 15.6, 0.09], [3.2, 18.7, 0.13],
  [6, 21.1, 0.12], [9, 22.9, 0.11], [12.2, 23.7, 0.1], [15.9, 23, 0.1], [18.9, 21.6, 0.13], [21.3, 18.7, 0.11], [23, 16, 0.1], [24, 12.5, 0.09],
  [23.4, 9, 0.1], [21.9, 6.1, 0.14], [19.2, 3.6, 0.12], [16.2, 1.8, 0.11], [12.7, 0.9, 0.09], [0.6, 3.6, 0.09], [0.7, 20.9, 0.08], [21, 0.3, 0.08],
  [24.3, 3.5, 0.09], [24.3, 20.9, 0.08], [21.2, 24.3, 0.07], [4, 24.5, 0.09],
];
const radial = (r: number) => {
  for (let k = 1; k < PROFILE.length; k++) {
    if (r <= PROFILE[k][0]) {
      const [a, va] = PROFILE[k - 1], [b, vb] = PROFILE[k];
      return va + ((vb - va) * (r - a)) / (b - a);
    }
  }
  return 0;
};
const nodeValue = (i: number, j: number) => {
  const r = Math.hypot(i - 12.5, j - 12.5);
  let v = radial(r) + 0.028 * Math.exp(-((r - 11.2) ** 2) / 1.5);
  for (const [x, y, a] of SPOTS) v += a * 0.82 * Math.exp(-((i - x) ** 2 + (j - y) ** 2) / 1.3);
  return v;
};
const SIZE = 466, CELLS = 25;
const Mesh = () => {
  const ref = useRef<HTMLCanvasElement>(null);
  useLayoutEffect(() => {
    const ctx = ref.current!.getContext("2d")!;
    const nodes = Array.from({ length: CELLS + 1 }, (_, j) => Array.from({ length: CELLS + 1 }, (_, i) => nodeValue(i, j)));
    const img = ctx.createImageData(SIZE, SIZE);
    for (let y = 0; y < SIZE; y++) for (let x = 0; x < SIZE; x++) {
      const gx = ((x + 0.5) / SIZE) * CELLS, gy = ((y + 0.5) / SIZE) * CELLS;
      const i = Math.floor(gx), j = Math.floor(gy), u = gx - i, w = gy - j;
      const a = nodes[j][i], b = nodes[j][i + 1], c = nodes[j + 1][i], d = nodes[j + 1][i + 1];
      let v = u > w ? a + u * (b - a) + w * (d - b) : a + w * (c - a) + u * (d - c);
      v = Math.min(Math.max(v, 0), 0.9999) * 8;
      const k = Math.floor(v), f = v - k, o = (y * SIZE + x) * 4;
      for (let n = 0; n < 3; n++) img.data[o + n] = (COOLWARM[k][n] + f * (COOLWARM[k + 1][n] - COOLWARM[k][n])) * SHADE;
      img.data[o + 3] = 255;
    }
    ctx.putImageData(img, 0, 0);
    for (let n = 1; n < CELLS; n++) {
      const p = Math.round((n * SIZE) / CELLS);
      ctx.fillStyle = "rgba(0,0,128,0.22)";
      ctx.fillRect(p - 2, 0, 3, SIZE); ctx.fillRect(0, p - 2, SIZE, 3);
      ctx.fillStyle = "rgba(0,0,128,0.68)";
      ctx.fillRect(p - 1, 0, 1, SIZE); ctx.fillRect(0, p - 1, SIZE, 1);
    }
    ctx.strokeStyle = "rgba(0,0,128,0.6)"; ctx.strokeRect(0.5, 0.5, SIZE - 1, SIZE - 1);
  }, []);
  return <MeshCanvas ref={ref} width={SIZE} height={SIZE} />;
};

const coolStops = COOLWARM.map((c, i) => <stop key={i} offset={i / 8} stopColor={`rgb(${c})`} />);
const TICKS: [string, number, number][] = [["4.0e-01", 661.5, 54], ["0.3", 709.5, 22], ["0.2", 755.5, 22], ["0.1", 801.5, 21], ["1.2e-07", 847.5, 54]];
const RenderOverlay = () => (
  <Overlay width="1168" height="564" viewBox="350 295 1168 564" fontFamily="Lato, sans-serif" fill="#eee">
    <defs><linearGradient id="cwv" x1="0" y1="1" x2="0" y2="0">{coolStops}</linearGradient></defs>
    <rect x="1407" y="661" width="16" height="186" fill="url(#cwv)" />
    {TICKS.map(([t, y, w]) => (
      <g key={t}><path d={`M1420 ${y}h12`} stroke="#fff" strokeWidth="1.200" /><text x="1437" y={y + 4} fontSize="16.500" textLength={w} lengthAdjust="spacingAndGlyphs">{t}</text></g>
    ))}
    <text transform="translate(1509 757) rotate(-90)" fontSize="16">E</text>
    <path d="M420.500 788V756" stroke="#d9d918" strokeWidth="1.200" /><path d="M420.500 748.500l2.500 8.500h-5z" fill="#e3e300" />
    <path d="M421 788.500h35" stroke="#e01010" strokeWidth="1.400" /><path d="M460 788.500l-8-3.500v7z" fill="#e00808" /><circle cx="420.500" cy="788.500" r="3.300" fill="#06590c" />
    <path d="M424 788.500h6" stroke="#ddd" strokeWidth="1.200" />
    <text x="421.500" y="757" fontSize="12">Y</text><text x="422.500" y="787" fontSize="12" fontWeight="700">Z</text><text x="453" y="788.500" fontSize="12">X</text>
  </Overlay>
);

const Knob = ({ x, y, c }: { x: number; y: number; c: string }) => <g><circle cx={x} cy={y} r="5.500" fill={c} stroke="#d6d8c9" strokeWidth="1.800" /><path d={`M${x + 5.2} ${y - 2}a5.500 5.500 0 0 1-8.500 6.500`} stroke="#6d6c5d" strokeWidth="1.800" fill="none" /><circle cx={x} cy={y} r="6.400" fill="none" stroke="#9a9a8c" strokeWidth=".7" /></g>;
const Transfer = () => (
  <svg width="372" height="261" viewBox="1539 492 372 261">
    <defs>
      <linearGradient id="cwh">{coolStops}</linearGradient>
      <linearGradient id="soft"><stop offset="0" stopColor="#fff" /><stop offset=".16" stopColor="#e7e9fb" /><stop offset=".35" stopColor="#e0eafd" /><stop offset=".48" stopColor="#ecedee" /><stop offset=".56" stopColor="#f4e4d9" /><stop offset=".65" stopColor="#f9cfbc" /><stop offset=".75" stopColor="#f4ac95" /><stop offset=".85" stopColor="#e17d6a" /><stop offset=".94" stopColor="#cf4c44" /><stop offset="1" stopColor="#b8152b" /></linearGradient>
    </defs>
    <rect x="1539" y="492" width="372" height="261" fill="#fff" />
    <path d="M1549 705L1902 500V705z" fill="url(#soft)" /><path d="M1898 503l4-3v205h-4z" fill="#8d6478" />
    <rect x="1547" y="500" width="3.500" height="205" fill="#959fa8" />
    <path d="M1546 706L1902 500" stroke="#3c3f44" strokeWidth="1.600" />
    <rect x="1547" y="721" width="355" height="24" fill="url(#cwh)" /><rect x="1547" y="721" width="7" height="24" fill="#6f7b9c" /><rect x="1894.500" y="721" width="7.500" height="24" fill="#8d6478" />
    <path d="M1910.500 492v261" stroke="#d2d2d2" strokeDasharray="27 2" />
    <Knob x={1902.5} y={499.5} c="#d06a80" /><Knob x={1546} y={705.5} c="#8592dd" /><Knob x={1546} y={733} c="#8592dd" /><Knob x={1724} y={733} c="#dfdfdb" /><Knob x={1902.5} y={733} c="#d06a80" />
  </svg>
);

const Y = "#f5bf22", R = "#e5392b";

export default function App() {
  return (
    <Desktop>
      <GlobalStyle /><Defs />
      <TopBar>
        <TopLeft>Activities<AppName><svg width="17" height="14" viewBox="0 0 17 14"><path d="M3 0h4L4 14H0z" fill="#8a8a8a" /><path d="M8 0h4L9 14H5z" fill="#707070" /><path d="M13 0h4l-3 14h-4z" fill="#555" /></svg>ParaView</AppName></TopLeft>
        <Clock>Вс, 15 мая&nbsp; 15∶46</Clock>
        <TopRight>
          <svg width="16" height="15" viewBox="0 0 16 15"><path d="M7 0q3 2 6 2 .5 9-6 12Q.5 11 1 2q3 0 6-2z" fill="#e2e2e2" /><path d="M7 3v2M7 6v5" stroke="#000" strokeWidth="2" /><circle cx="13.500" cy="12.500" r="1.800" fill="#3584e4" /></svg>
          <Lang>en</Lang>
          <svg width="16" height="14" viewBox="0 0 16 14"><path d="M0 3q8-6 16 0L8 14z" fill="#5a5a5a" /><path d="M3 7q5-4 10 0l-5 7z" fill="#e2e2e2" /></svg><TrayGap $w={13} />
          <svg width="16" height="16" viewBox="0 0 16 16"><path d="M0 5h3l5-4.500v15L3 11H0z" fill="#e2e2e2" /><path d="M10 5q2 3 0 6M12 2q5 6 0 12" stroke="#e2e2e2" strokeWidth="1.600" fill="none" /></svg><TrayGap $w={14} />
          <svg width="10" height="15" viewBox="0 0 10 15"><path d="M0 2h2.500V0h5v2H10v13H0z" fill="#e2e2e2" /><path d="M6 4L2.500 9H5l-1 4 3.500-5H5z" fill="#000" /></svg><TrayGap $w={9} />
          99%
        </TopRight>
      </TopBar>
      <TitleBar><span /><span>ParaView 5.9.1</span>
        <WinButtons>
          <svg width="10" height="10" viewBox="0 0 10 10"><path d="M1 8.500h8" stroke="#eee" strokeWidth="2" /></svg>
          <svg width="10" height="10" viewBox="0 0 10 10"><rect x="2" y="1.500" width="6" height="6.500" fill="none" stroke="#eee" strokeWidth="2.200" /></svg>
          <svg width="10" height="10" viewBox="0 0 10 10"><path d="M1.500 1l7 7.500m0-7.500l-7 7.500" stroke="#eee" strokeWidth="2" /></svg>
        </WinButtons>
      </TitleBar>
      <MenuBar>{["File", "Edit", "View", "Sources", "Filters", "Extractors", "Tools", "Catalyst", "Macros", "Help"].map(m => <span key={m}>{m}</span>)}</MenuBar>
      <DarkBar>
        <Tool><Folder /></Tool><Tool><Folder down /></Tool><Tool><SaveIcon /></Tool><Tool><ExtractIcon /></Tool><Tool><CatalystIcon /></Tool><Gap $w={5} />
        <Tool><ServerIcon c="#8fce86" kind={0} /></Tool><Tool><ServerIcon c="#b5453b" kind={1} /></Tool><Tool><TimerIcon /></Tool><Gap $w={5} />
        <Tool><UndoIcon c="#d0413a" /></Tool><Tool><UndoIcon c="#6b7073" flip /></Tool><Gap $w={5} />
        <Tool><CubeArrowIcon /></Tool><Tool><BoxSelectIcon /></Tool><Tool><PaletteIcon /></Tool><Gap $w={8} />
        <Tool><Play d="M2 3h4v16H2zM20 3v16L7 11z" /></Tool><Tool><Play d="M12 3v16L1 11zM13 3h2v16h-2zM17 3h3v16h-3z" /></Tool><Tool><Play d="M6 3l12 8L6 19z" /></Tool>
        <Tool><Play d="M1 3h3v16H1zM6 3h2v16H6zM10 3l11 8-11 8z" /></Tool><Tool><Play d="M2 3l12 8L2 19zM15 3h4v16h-4z" /></Tool><Tool><LoopIcon /></Tool>
        <TimeLabel>Time:</TimeLabel><TimeInput>0</TimeInput><TimeSpin><span>0</span>
          <SpinMarks><svg width="10" height="10" viewBox="0 0 10 10"><path d="M0 4.500h10" stroke="#6f7678" strokeWidth="2" /></svg>
          <svg width="10" height="10" viewBox="0 0 10 10"><path d="M0 4.500h10M5-.5v10" stroke="#6f7678" strokeWidth="2" /></svg></SpinMarks></TimeSpin>
        <Tool><Svg><Camera x={0} y={0} k={0.95} /><path d="M12 11l8 9" stroke="#2d95c9" strokeWidth="3" /></Svg></Tool>
        <Tool><Svg><Camera x={0} y={0} k={0.95} /><path d="M16.500 12v10M11.500 17h10" stroke="#2d95c9" strokeWidth="3.200" /></Svg></Tool>
      </DarkBar>
      <LightBar $pad={4}>
        <Tool $on><ColorBarIcon /></Tool><Tool><ColorEditIcon /></Tool><Tool><LinkColorIcon /></Tool><Tool><RescaleIcon /></Tool><Tool><RescaleIcon t="c" /></Tool><Tool $dim><RescaleIcon t="t" dark="#666" /></Tool><Tool><RescaleIcon eye /></Tool>
        <Combo $w={150} $pad={9}><Dot />E<Caret /></Combo><Gap $w={4} /><Combo $w={91} $off><Caret $off /></Combo><Gap $w={8} /><Combo $w={166}>Surface With Edges<Caret /></Combo><Gap $w={9} />
        <Tool><Cross4 /></Tool><Tool><Cross4 inward /></Tool><Tool><ZoomBoxIcon /></Tool>
        <Tool><AxisIcon t="+X" right side={Y} up={GR} sq={R} /></Tool><Tool><AxisIcon t="-X" right={false} side={Y} up={GR} sq={R} /></Tool>
        <Tool><AxisIcon t="+Y" right={false} side={R} up={GR} sq={Y} /></Tool><Tool><AxisIcon t="-Y" right side={R} up={GR} sq={Y} /></Tool>
        <Tool><AxisIcon t="+Z" right side={R} up={Y} sq={GR} /></Tool><Tool><AxisIcon t="-Z" right={false} side={R} up={Y} sq={GR} /></Tool>
        <Tool><RotIcon t="+90" /></Tool><Tool><RotIcon t="-90" flip /></Tool><Gap $w={8} />
        <Tool $on><OrientIcon /></Tool><Tool><CenterIcon mode={0} /></Tool><Tool><CenterIcon mode={1} /></Tool><Tool><CenterIcon mode={2} /></Tool>
      </LightBar>
      <LightBar $pad={3.5}>
        {filterIcons.slice(0, 11).map((ic, i) => <Tool key={i} $w={35}>{ic}</Tool>)}<Gap $w={7} />
        {filterIcons.slice(11).map((ic, i) => <Tool key={i} $w={35}>{ic}</Tool>)}<Gap $w={6.5} /><Tool $w={35}><RulerIcon /></Tool>
      </LightBar>

      <Workspace>
        <Column>
          <DockTitle $h={27} $w={338}><span>Pipeline Browser</span><DockMarks /></DockTitle>
          <Tree>
            <TreeRow $h={30}><span /><svg width="18" height="30" viewBox="0 0 18 30"><path d="M9.500 0v5M9.500 25.500v4.500" stroke="#777" /><rect x="5.500" y="8.500" width="7" height="13" fill="#b9b9b9" stroke="#222" /><rect x="7" y="10" width="4" height="2" fill="#111" /><path d="M7 15h4M7 17.500h4" stroke="#888" /></svg><Plain>builtin:</Plain></TreeRow>
            <TreeRow $h={22}><Row $w={48}><Gap $w={4.5} /><EyeIcon /></Row><svg width="18" height="18" viewBox="0 0 18 18"><path d="M1 4l8-2.500L17 4v10l-8 3-8-4z" fill="#6f9f55" stroke="#5c7449" /><path d="M8 6l9-2v10l-9 3z" fill="#8fc968" stroke="#5c7449" strokeWidth=".7" /><path d="M1 4l7 2v11l-7-4z" fill="#5f8050" /></svg><Selected>diff.vts</Selected></TreeRow>
          </Tree>
          <Handle $ml={145} $mt={2} $mb={2} />
          <Tabs><Tab $w={97} $pad={12} $on>Properties</Tab><Tab $w={110} $pad={12}>Information</Tab></Tabs>
          <DockTitle $h={26} $w={338} $low={0}><span>Properties</span><DockMarks /></DockTitle>
          <Form>
            <Row $gap={2} $h={34}><Button $w={94}>Apply<Corner /></Button><Button $w={94} $off>Reset</Button><Button $w={94}>Delete</Button>
              <SmallButton><Svg s={18} v={18}><path d="M4.500 5.500q.5-3.500 4.500-3.500t4.500 3.500q0 2-2.300 3.500T9 11.500v1M9 14v2.500" stroke="#62735a" strokeWidth="3.200" /><path d="M4.500 5.500q.5-3.500 4.500-3.500t4.500 3.500q0 2-2.300 3.500T9 11.500v1M9 14v2.500" stroke={GR} strokeWidth="1.800" /></Svg></SmallButton></Row>
            <Row $gap={2} $mt={6}><Search $w={290}>Search ... (use Esc to clear text)</Search><SmallButton $w={28}><Gear /></SmallButton></Row>
            <Row $mt={10} $h={28}><Minus /><GroupName>Properties (diff.vts)</GroupName><Row $gap={4}><SmallButton><CopyIcon /></SmallButton><SmallButton $off><PasteIcon /></SmallButton><SmallButton $off><RefreshIcon c="#cfcfcf" e="#bbb" /></SmallButton><SmallButton $off /></Row></Row>
            <ArrayList><ArrayRow><Check on /><ArrayTitle>Cell/Point Array Status</ArrayTitle></ArrayRow><ArrayRow><Check on /><Gap $w={7} /><DotsIcon /><ArrayName>E</ArrayName></ArrayRow></ArrayList>
            <Row $mt={5} $h={34} $align="flex-start"><Label $w={81}>Time Array</Label><Combo $w={260} $off>None</Combo></Row>
            <Row $mt={10} $h={28}><Minus /><GroupName>Display (StructuredG</GroupName><Row $gap={4}><SmallButton><CopyIcon /></SmallButton><SmallButton $off><PasteIcon /></SmallButton><SmallButton><RefreshIcon c="#3b8fc0" e="#6d8794" /></SmallButton><SmallButton /></Row></Row>
            <Row $mt={10} $h={34} $align="flex-start"><Label $w={138}>Representation</Label><Combo $w={200}>Surface With Edges</Combo></Row>
            <Section $h={37} $top={9}>Coloring</Section>
            <Row $gap={4}><Combo $w={153} $pad={9}><Dot />E<Caret /></Combo><Combo $w={153} $off><Caret $off /></Combo></Row>
            <Row $gap={4} $mt={4}><Button $w={94}>Edit</Button><SmallButton><LinkColorIcon s={16} /></SmallButton><SmallButton><RescaleSmall /></SmallButton><SmallButton><RescaleSmall t="c" /></SmallButton><SmallButton><RescaleSmall t="t" /></SmallButton><SmallButton><HeartIcon /></SmallButton><SmallButton $on><ColorBarIcon s={15} /></SmallButton><SmallButton /></Row>
          </Form>
        </Column>

        <Column>
          <LayoutTabs><LayoutTab><svg width="7" height="7" viewBox="0 0 7 7"><path d="M0 3.500h7M3.500 0v7" stroke="#e5e5e5" strokeWidth="1.500" /></svg><span>Layout #1</span><svg width="8" height="8" viewBox="0 0 8 8"><path d="M1 1l6 6m0-6L1 7" stroke="#e0e0e0" strokeWidth="1.500" /></svg></LayoutTab><AddTab>+</AddTab></LayoutTabs>
          <Frame><Pane>
            <ViewBar>
              {viewIcons.map((ic, i) => typeof ic === "number" ? <Gap key={i} $w={ic} /> : <ViewTool key={i}>{ic}</ViewTool>)}
              <ViewName>RenderView1</ViewName>
              <ViewButtons>
                <SmallButton $w={30} $h={30}><svg width="14" height="14" viewBox="0 0 14 14"><rect x=".5" y=".5" width="13" height="13" fill="#d3d8ef" stroke="#9b9fa8" /><path d="M7 1v12" stroke="#9b9fa8" /></svg></SmallButton>
                <SmallButton $w={30} $h={30}><svg width="14" height="14" viewBox="0 0 14 14"><rect x=".5" y=".5" width="13" height="13" fill="#d3d8ef" stroke="#9b9fa8" /><path d="M1 7h12" stroke="#9b9fa8" /></svg></SmallButton>
                <SmallButton $w={30} $h={30}><svg width="6" height="6" viewBox="0 0 6 6"><path d="M0 3h6M3 0v6" stroke="#e2e2e2" strokeWidth="1.500" /></svg></SmallButton>
                <SmallButton $w={30} $h={30}><svg width="6" height="6" viewBox="0 0 6 6"><path d="M0 0l6 6m0-6L0 6" stroke="#dedede" strokeWidth="1.300" /></svg></SmallButton>
              </ViewButtons>
            </ViewBar>
            <RenderView><Mesh /><RenderOverlay /></RenderView>
          </Pane></Frame>
          <Handle $ml={568} $mt={1} $mb={1} />
          <DockTitle $h={28} $w={1184}><span>Output Messages</span><DockMarks /></DockTitle>
          <OutputBox />
          <OutputRow><Check on /><OutLabel>Show full messages</OutLabel><Button $w={138}>Copy to Clipboard</Button><Gap $w={6} /><Button $w={103}>Save to File...</Button><Gap $w={6} /><Button $w={94}>Clear</Button></OutputRow>
        </Column>

        <Column>
          <DockTitle $h={27} $w={393} $left={3}><span>Color Map Editor</span><DockMarks /></DockTitle>
          <MapForm>
            <Row $gap={2}><Search $w={282}>Search ... (use Esc to clear text)</Search><SmallButton $w={28}><Gear /></SmallButton><SmallButton $w={28} $on><ColorBarIcon s={15} /></SmallButton><SmallButton $w={28}><Svg s={18} v={18}><rect x="4" y="2" width="7" height="14" fill="url(#rain)" stroke="#555" strokeWidth=".7" /><text x="6" y="15.500" fontSize="14" fontWeight="700" fontStyle="italic" fill="#000" fontFamily="Noto Sans">e</text></Svg></SmallButton></Row>
            <ArrayLabel>Array Name: E</ArrayLabel>
            <Row $h={60}><Wrapped>{"Automatic\nRescale Range\nMode"}</Wrapped><Combo $w={260} $up>Grow and update on 'Apply'</Combo></Row>
            <Line $h={36} $top={2}><Check /><span>Interpret Values As Categories</span></Line>
            <Line $h={34}><Check /><span>Rescale On Visibility Change</span></Line>
            <Section $h={35} $top={7}>Mapping Data</Section>
            <Transfer />
            <Row $mt={6}><Label $w={44} $top={0}>Data:</Label><DataInput>0</DataInput></Row>
            <Line $h={42}><Check /><span>Enable freehand drawing of opacity transfer funct</span></Line>
            <Line $h={30}><Check /><span>Use log scale when mapping data to colors</span></Line>
            <Line $h={42}><Check /><span>Enable opacity mapping for surfaces</span></Line>
            <Line $h={30} $off><Check off /><span>Use log scale when mapping data to opacity</span></Line>
            <Section $h={34} $top={7}>Data Histogram</Section>
            <Line $h={36}><Check /><span>Display data histogram</span></Line>
            <Line $h={36} $off><Check off /><span>Automatically recompute data histogram</span></Line>
          </MapForm>
        </Column>
      </Workspace>
      <SideHandle $left={339} /><SideHandle $left={1527} />
      <StatusBar><SmallButton $w={24} $h={24} $off><svg width="8" height="8" viewBox="0 0 8 8"><path d="M1 1l6 6m0-6L1 7" stroke="#bcbcbc" strokeWidth="3" /></svg></SmallButton><Progress /></StatusBar>
    </Desktop>
  );
}
